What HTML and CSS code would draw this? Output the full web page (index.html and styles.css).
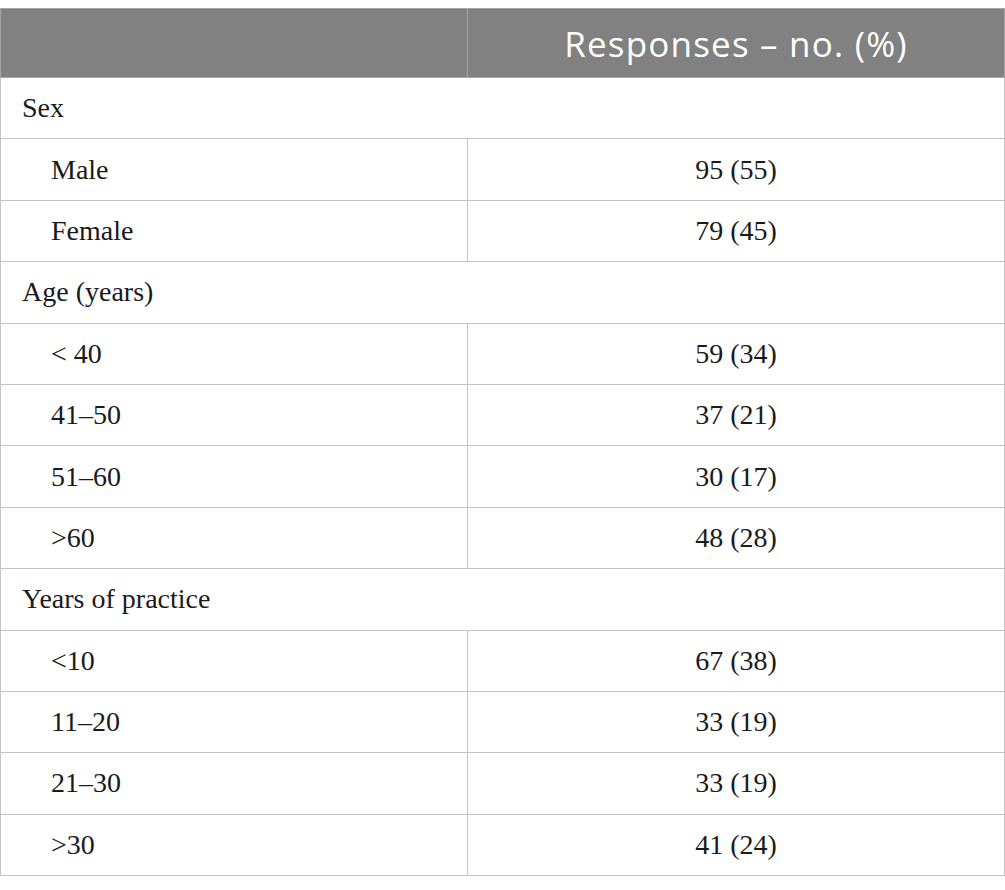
FILE: index.html
```html
<!DOCTYPE html>
<html>
<head>
<meta charset="utf-8">
<link rel="stylesheet" href="styles.css">
</head>
<body>
<table class="data">
  <thead>
    <tr><th class="blank"></th><th class="hcol">Responses – no. (%)</th></tr>
  </thead>
  <tbody>
    <tr class="group"><td colspan="2">Sex</td></tr>
    <tr><td class="sub">Male</td><td class="val">95 (55)</td></tr>
    <tr><td class="sub">Female</td><td class="val">79 (45)</td></tr>
    <tr class="group"><td colspan="2">Age (years)</td></tr>
    <tr><td class="sub">&lt; 40</td><td class="val">59 (34)</td></tr>
    <tr><td class="sub">41–50</td><td class="val">37 (21)</td></tr>
    <tr><td class="sub">51–60</td><td class="val">30 (17)</td></tr>
    <tr><td class="sub">&gt;60</td><td class="val">48 (28)</td></tr>
    <tr class="group"><td colspan="2">Years of practice</td></tr>
    <tr><td class="sub">&lt;10</td><td class="val">67 (38)</td></tr>
    <tr><td class="sub">11–20</td><td class="val">33 (19)</td></tr>
    <tr><td class="sub">21–30</td><td class="val">33 (19)</td></tr>
    <tr><td class="sub">&gt;30</td><td class="val">41 (24)</td></tr>
  </tbody>
</table>
</body>
</html>
```
FILE: styles.css
```css
html, body { background: #fff; }
body {
  margin: 8px 0 0 0;
}
.data {
  width: 1005px;
  border-collapse: collapse;
  table-layout: fixed;
  font-family: "Liberation Serif", "Times New Roman", serif;
  font-size: 28px;
  color: #1a1a1a;
}
.data th, .data td {
  border: 1px solid #c3c3c3;
  padding: 0;
}
.data thead th {
  background: #808180;
  height: 68px;
  color: #fff;
  font-family: "Open Sans", Lato, sans-serif;
  font-weight: 400;
  font-size: 35px;
  letter-spacing: 1.2px;
  text-align: center;
  border-color: #a6a6a6;
}
.data thead th.blank { width: 466px; }
.data tbody td {
  height: 60.4px;
  vertical-align: middle;
}
.group td { padding-left: 21px; }
.sub { padding-left: 50px !important; }
.val { text-align: center; }
```
